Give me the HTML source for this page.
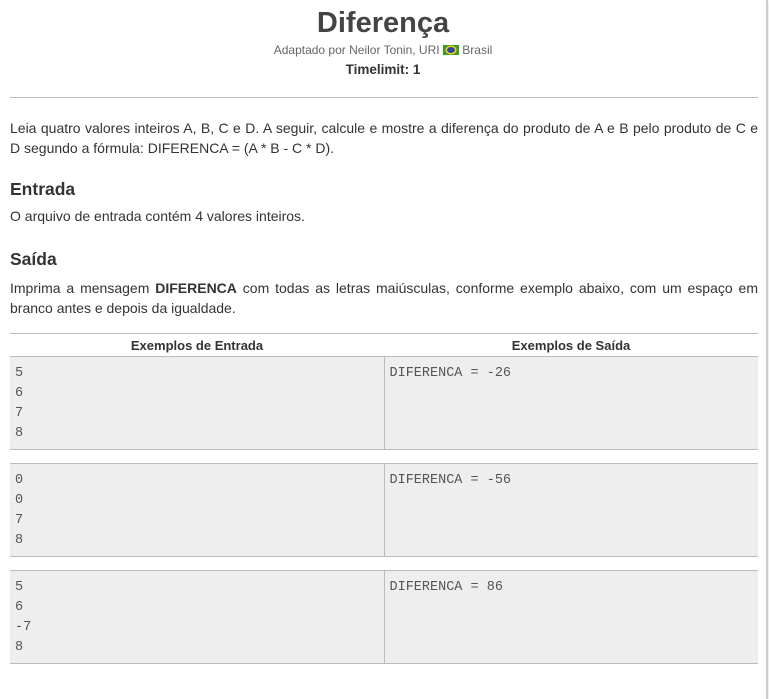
<!DOCTYPE html>
<html><head><meta charset="utf-8"><style>
body{margin:0;background:#fff;width:769px;height:699px;overflow:hidden;font-family:"Liberation Sans",sans-serif;color:#333;}
.wrap{position:absolute;left:0;top:0;width:766px;height:699px;border-right:2px solid #ccc;box-shadow:0 2px 6px rgba(0,0,0,.15);}
h1{position:absolute;top:7px;left:0;width:766px;text-align:center;margin:0;font-size:29px;font-weight:bold;color:#444;}
.sub{position:absolute;top:43px;width:766px;text-align:center;font-size:12px;color:#666;}
.tl{position:absolute;top:62px;width:766px;text-align:center;font-size:13.5px;font-weight:bold;color:#333;}
.flag{display:inline-block;width:16px;height:10px;background:#3a9a2c;position:relative;vertical-align:-1px}
.flag:after{content:"";position:absolute;left:4px;top:2px;width:8px;height:6px;border-radius:50%;background:#2a4aa0;box-shadow:0 0 0 1.5px #f5d020}
hr{position:absolute;top:97px;left:10px;width:748px;margin:0;border:0;border-top:1px solid #bbb;}
.p{position:absolute;left:10px;width:748px;font-size:14px;line-height:19.5px;color:#333;text-align:justify}
.h{position:absolute;left:10px;font-size:17.5px;font-weight:bold;color:#333}
table{position:absolute;left:10px;width:748px;border-collapse:collapse;font-size:13px}
th{height:22px;border-top:1px solid #bbb;border-bottom:1px solid #bbb;font-weight:bold;color:#333;padding:0}
td{background:#eee;vertical-align:top;font-family:"Liberation Mono",monospace;font-size:13.5px;color:#555;line-height:20px;padding:7px 5px 5px 5px;border-bottom:1px solid #bbb;box-sizing:border-box}
td.l{border-right:1px solid #bbb;width:374px}
</style></head><body><div class="wrap">
<h1>Diferença</h1>
<div class="sub">Adaptado por Neilor Tonin, URI <span class="flag"></span> Brasil</div>
<div class="tl">Timelimit: 1</div>
<hr>
<div class="p" style="top:119px">Leia quatro valores inteiros A, B, C e D. A seguir, calcule e mostre a diferença do produto de A e B pelo produto de C e D segundo a fórmula: DIFERENCA = (A * B - C * D).</div>
<div class="h" style="top:179px">Entrada</div>
<div class="p" style="top:207px">O arquivo de entrada contém 4 valores inteiros.</div>
<div class="h" style="top:249px">Saída</div>
<div class="p" style="top:279px">Imprima a mensagem <b>DIFERENCA</b> com todas as letras maiúsculas, conforme exemplo abaixo, com um espaço em branco antes e depois da igualdade.</div>
<table style="top:333px"><tr><th>Exemplos de Entrada</th><th>Exemplos de Saída</th></tr>
<tr><td class="l" style="height:91px">5<br>6<br>7<br>8</td><td style="height:91px">DIFERENCA = -26</td></tr></table>
<table style="top:463px"><tr><td class="l" style="height:92px;border-top:1px solid #bbb">0<br>0<br>7<br>8</td><td style="height:92px;border-top:1px solid #bbb">DIFERENCA = -56</td></tr></table>
<table style="top:570px"><tr><td class="l" style="height:92px;border-top:1px solid #bbb">5<br>6<br>-7<br>8</td><td style="height:92px;border-top:1px solid #bbb">DIFERENCA = 86</td></tr></table>
</div></body></html>
